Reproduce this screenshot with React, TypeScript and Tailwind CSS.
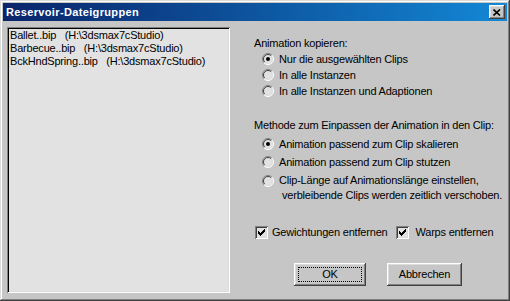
import React from 'react';

const font = "font-['Liberation_Sans',Arial,sans-serif]";

function Radio({ checked }: { checked?: boolean }) {
  return (
    <svg width="12" height="12" viewBox="0 0 12 12" className="shrink-0">
      <circle cx="6" cy="6" r="5.5" fill="#e2e2e2" />
      <path d="M2.1 9.9 A5.5 5.5 0 0 1 9.9 2.1" fill="none" stroke="#808080" />
      <path d="M2.8 9.2 A4.5 4.5 0 0 1 9.2 2.8" fill="none" stroke="#404040" />
      <path d="M9.9 2.1 A5.5 5.5 0 0 1 2.1 9.9" fill="none" stroke="#ffffff" />
      <path d="M9.2 2.8 A4.5 4.5 0 0 1 2.8 9.2" fill="none" stroke="#dcdcdc" />
      {checked && <circle cx="6" cy="6" r="2" fill="#000" />}
    </svg>
  );
}

function Check() {
  return (
    <div className="relative h-[13px] w-[13px] shrink-0 bg-[#e2e2e2] shadow-[inset_1px_1px_#808080,inset_-1px_-1px_#ffffff,inset_2px_2px_#404040,inset_-2px_-2px_#dcdcdc]">
      <svg width="13" height="13" viewBox="0 0 13 13" className="absolute left-0 top-0">
        <path d="M3 5 L5 7 L10 2 L10 5 L5 10 L3 8 Z" fill="#000" shapeRendering="crispEdges" />
      </svg>
    </div>
  );
}

function RadioRow({ checked, label }: { checked?: boolean; label: string }) {
  return (
    <div className="flex items-center gap-[5px] pl-[8px]">
      <Radio checked={checked} />
      <span>{label}</span>
    </div>
  );
}

const raised =
  'shadow-[inset_-1px_-1px_#404040,inset_1px_1px_#ffffff,inset_-2px_-2px_#808080,inset_2px_2px_#dcdcdc]';

export default function App() {
  const files = [
    'Ballet..bip   (H:\\3dsmax7cStudio)',
    'Barbecue..bip   (H:\\3dsmax7cStudio)',
    'BckHndSpring..bip   (H:\\3dsmax7cStudio)',
  ];

  return (
    <div
      className={`${font} h-[301px] w-[510px] bg-[#c6c6c6] p-[3px] text-[11px] leading-[13px] tracking-[-0.2px] text-black shadow-[inset_-1px_-1px_#404040,inset_1px_1px_#dcdcdc,inset_-2px_-2px_#808080,inset_2px_2px_#ffffff]`}
    >
      <div className="flex h-[18px] items-center justify-between bg-gradient-to-r from-[#0a246a] to-[#1488d6] pl-[3px] pr-[2px]">
        <span className="text-[11px] font-bold tracking-[0.35px] text-white">Reservoir-Dateigruppen</span>
        <div className={`flex h-[14px] w-[16px] items-center justify-center bg-[#c6c6c6] ${raised}`}>
          <svg width="8" height="7" viewBox="0 0 8 7">
            <path d="M0.5 0.5 L7 6.5 M7 0.5 L0.5 6.5" stroke="#000" strokeWidth="1.6" />
          </svg>
        </div>
      </div>

      <div className="flex">
        <div className="ml-[4px] mt-[6px] h-[266px] w-[223px] bg-[#e2e2e2] py-[1px] pl-[3px] shadow-[inset_1px_1px_#808080,inset_-1px_-1px_#ffffff,inset_2px_2px_#000000,inset_-2px_-2px_#dcdcdc]">
          <div className="pt-[1px]">
            {files.map((f) => (
              <div key={f} className="whitespace-pre">
                {f}
              </div>
            ))}
          </div>
        </div>

        <div className="flex flex-col pl-[24px]">
          <div className="mt-[16px]">Animation kopieren:</div>
          <div className="mt-[1px] flex flex-col">
            <div className="flex h-[16px] items-center">
              <RadioRow checked label="Nur die ausgewählten Clips" />
            </div>
            <div className="flex h-[16px] items-center">
              <RadioRow label="In alle Instanzen" />
            </div>
            <div className="flex h-[16px] items-center">
              <RadioRow label="In alle Instanzen und Adaptionen" />
            </div>
          </div>

          <div className="mt-[20px]">Methode zum Einpassen der Animation in den Clip:</div>
          <div className="mt-[3px] flex flex-col">
            <div className="flex h-[18px] items-center">
              <RadioRow checked label="Animation passend zum Clip skalieren" />
            </div>
            <div className="flex h-[18px] items-center">
              <RadioRow label="Animation passend zum Clip stutzen" />
            </div>
            <div className="flex items-start gap-[5px] pl-[8px] pt-[3px]">
              <div className="pt-[0.5px]">
                <Radio />
              </div>
              <div>
                <div>Clip-Länge auf Animationslänge einstellen,</div>
                <div className="pl-[3px] pt-[2px]">verbleibende Clips werden zeitlich verschoben.</div>
              </div>
            </div>
          </div>

          <div className="mt-[24px] flex h-[13px] items-center pl-[1px]">
            <Check />
            <span className="ml-[4px]">Gewichtungen entfernen</span>
            <div className="ml-[9px]">
              <Check />
            </div>
            <span className="ml-[6px]">Warps entfernen</span>
          </div>

          <div className="mt-[24px] flex gap-[21px] pl-[40px]">
            <div className={`relative flex h-[23px] w-[72px] items-center justify-center ${raised}`}>
              <div className="absolute inset-[4px] border border-dotted border-black" />
              <span>OK</span>
            </div>
            <div className={`flex h-[23px] w-[75px] items-center justify-center ${raised}`}>
              <span>Abbrechen</span>
            </div>
          </div>
        </div>
      </div>
    </div>
  );
}
